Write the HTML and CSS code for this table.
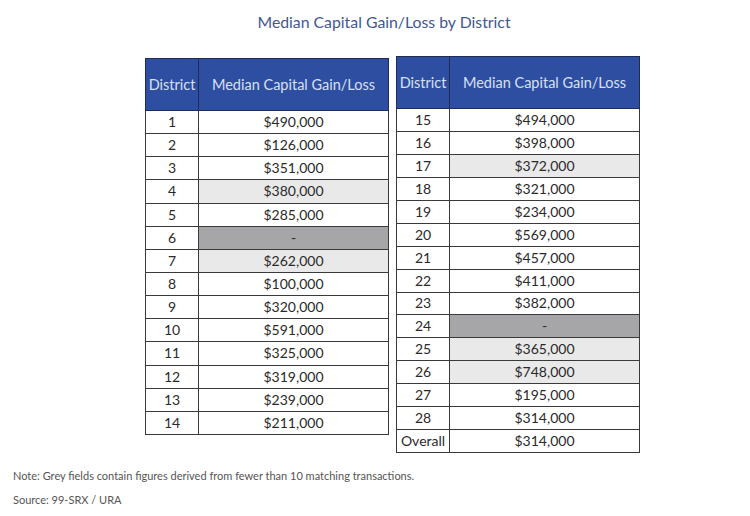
FILE: index.html
```html
<!DOCTYPE html>
<html>
<head>
<meta charset="utf-8">
<link rel="stylesheet" href="styles.css">
</head>
<body>
<h1 class="title">Median Capital Gain/Loss by District</h1>
<div class="tables">
  <table class="tbl tbl-left">
    <thead><tr><th class="c-d">District</th><th class="c-v">Median Capital Gain/Loss</th></tr></thead>
    <tbody>
      <tr><td>1</td><td>$490,000</td></tr>
      <tr><td>2</td><td>$126,000</td></tr>
      <tr><td>3</td><td>$351,000</td></tr>
      <tr><td>4</td><td class="lg">$380,000</td></tr>
      <tr><td>5</td><td>$285,000</td></tr>
      <tr><td>6</td><td class="dg">-</td></tr>
      <tr><td>7</td><td class="lg">$262,000</td></tr>
      <tr><td>8</td><td>$100,000</td></tr>
      <tr><td>9</td><td>$320,000</td></tr>
      <tr><td>10</td><td>$591,000</td></tr>
      <tr><td>11</td><td>$325,000</td></tr>
      <tr><td>12</td><td>$319,000</td></tr>
      <tr><td>13</td><td>$239,000</td></tr>
      <tr><td>14</td><td>$211,000</td></tr>
    </tbody>
  </table>
  <table class="tbl tbl-right">
    <thead><tr><th class="c-d">District</th><th class="c-v">Median Capital Gain/Loss</th></tr></thead>
    <tbody>
      <tr><td>15</td><td>$494,000</td></tr>
      <tr><td>16</td><td>$398,000</td></tr>
      <tr><td>17</td><td class="lg">$372,000</td></tr>
      <tr><td>18</td><td>$321,000</td></tr>
      <tr><td>19</td><td>$234,000</td></tr>
      <tr><td>20</td><td>$569,000</td></tr>
      <tr><td>21</td><td>$457,000</td></tr>
      <tr><td>22</td><td>$411,000</td></tr>
      <tr><td>23</td><td>$382,000</td></tr>
      <tr><td>24</td><td class="dg">-</td></tr>
      <tr><td>25</td><td class="lg">$365,000</td></tr>
      <tr><td>26</td><td class="lg">$748,000</td></tr>
      <tr><td>27</td><td>$195,000</td></tr>
      <tr><td>28</td><td>$314,000</td></tr>
      <tr><td>Overall</td><td>$314,000</td></tr>
    </tbody>
  </table>
</div>
<p class="note">Note: Grey fields contain figures derived from fewer than 10 matching transactions.</p>
<p class="note source">Source: 99-SRX / URA</p>
</body>
</html>
```
FILE: styles.css
```css
html, body {
  margin: 0;
  padding: 0;
  background: #ffffff;
  font-family: Lato, "Noto Sans", sans-serif;
  color: #222;
}
.title {
  margin: 0;
  padding: 12px 0 0 18px;
  text-align: center;
  font-size: 15.8px;
  font-weight: normal;
  color: #3f5794;
  line-height: 20px;
  height: 44px;
  box-sizing: border-box;
}
.tables {
  display: flex;
  align-items: flex-start;
  gap: 7px;
  padding-left: 145px;
}
.tbl {
  border-collapse: collapse;
  border: 1.5px solid #3a3a3a;
  font-size: 14px;
  text-align: center;
}
.tbl-left { margin-top: 14px; }
.tbl-right { margin-top: 12px; }
.tbl th {
  background: #2e4ea2;
  color: #d8e0f3;
  font-weight: normal;
  font-size: 14.5px;
  height: 51px;
  padding: 0;
  border: 1px solid #1f2c55;
}
.c-d { width: 52px; }
.c-v { width: 189px; }
.tbl td {
  border: 1px solid #3a3a3a;
  padding: 0;
  line-height: 16px;
  color: #2a2a2a;
}
.tbl-left td { height: 22.15px; }
.tbl-right td { height: 21.95px; }
.tbl td.lg { background: #e9e9e9; }
.tbl td.dg { background: #a6a6a8; }
.note {
  margin: 0;
  padding: 16px 0 0 13px;
  font-size: 11px;
  color: #555;
  line-height: 14px;
}
.note.source { padding-top: 10px; }
```
